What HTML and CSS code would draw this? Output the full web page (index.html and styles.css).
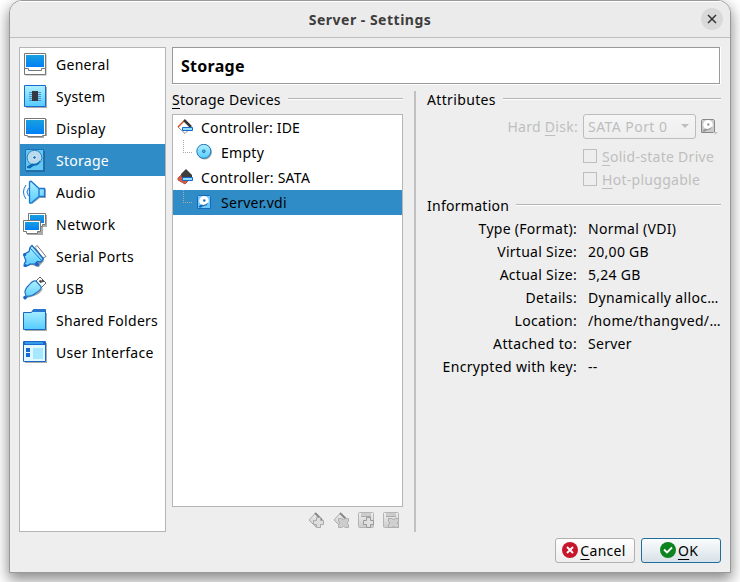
FILE: index.html
```
<!DOCTYPE html>
<html lang="en">
<head>
<meta charset="utf-8">
<title>Server - Settings</title>
<link rel="stylesheet" href="styles.css">
</head>
<body>
<svg class="defs" aria-hidden="true">
  <defs>
    <linearGradient id="screen" x2="0" y2="1"><stop stop-color="#189fe0"/><stop offset="1" stop-color="#0080f6"/></linearGradient>
    <linearGradient id="cyan" x2="0" y2="1"><stop stop-color="#b0f0ff"/><stop offset="1" stop-color="#55ccff"/></linearGradient>
    <linearGradient id="gray" x2="0" y2="1"><stop stop-color="#eee"/><stop offset="1" stop-color="#ccc"/></linearGradient>
    <symbol id="disk-mini" viewBox="0 0 16 16">
      <path d="M2.500 1.500h11l1 1v12h-13v-12z" class="disk-case"/>
      <circle cx="8" cy="6.800" r="4.800" class="disk-plate"/>
      <circle cx="8.300" cy="6.500" r="1.200" class="disk-hub"/>
      <path d="M2.500 12.500L5 10.500Q9 12 12 8.500 11.500 12 7.500 12L4 14z" class="disk-arm"/>
    </symbol>
  </defs>
</svg>
<div class="window">
  <header class="titlebar">
    <h1>Server - Settings</h1>
    <button class="close" aria-label="Close"><svg width="10" height="10" viewBox="0 0 10 10"><path d="M1 1 L9 9 M9 1 L1 9" stroke="#333" stroke-width="1.500"/></svg></button>
  </header>
  <main class="content">
    <nav class="sidebar">
      <a class="item"><svg class="icon" viewBox="0 0 24 24"><path d="M2.500 2.500h21v21h-21z" fill="#aaa"/><path d="M1.500 1.500h21v21h-21z" fill="#fff" stroke="#777"/><path d="M3 3h18v12H3z" fill="url(#screen)"/><path d="M1.500 16.500h4v2h13v-2h4" fill="none" stroke="#777"/></svg><span>General</span></a>
      <a class="item"><svg class="icon" viewBox="0 0 24 24"><path d="M3 3h21v21H3z" fill="#aaa"/><path d="M1.500 1.500h21v21h-21z" fill="url(#cyan)" stroke="#1768d0"/><path d="M6 8.500h12M6 10.500h12M6 12.500h12M6 14.500h12M6 16.500h12" stroke="#4d93c7"/><path d="M9 7h6v10H9z" fill="#343942"/></svg><span>System</span></a>
      <a class="item"><svg class="icon" viewBox="0 0 24 24"><path d="M3 3h21v17h-3v2H5z" fill="#aaa"/><path d="M1.500 2.500h21v17h-3v1h-15v-1h-3z" fill="#fff" stroke="#777"/><path d="M3 4h18v14H3z" fill="url(#screen)"/></svg><span>Display</span></a>
      <a class="item selected"><svg class="icon" viewBox="0 0 24 24"><path d="M3 3h19v21H3z" fill="#256c9e"/><path d="M2.500 1.500h18v21h-18z" fill="#65c8f3" stroke="#1d71b9"/><circle cx="11.500" cy="9.700" r="7.400" fill="#b9daec" stroke="#2781bd"/><circle cx="11.500" cy="9.500" r="1.800" fill="#176bb4" stroke="#e0f4ff"/><path d="M4 18.500l5-3q6 1 8.500-4-.5 6-6.500 6l-4 3-3-.5z" fill="#0968b3"/></svg><span>Storage</span></a>
      <a class="item"><svg class="icon" viewBox="0 0 24 24"><path d="M9 2l8 7h6v9h-6l-8 6z" fill="#aaa"/><path d="M6.500 2Q8 .5 9 2l7 6.500v8L8.500 23Q6 24 6.500 21zM16 8.500h5.500v8H16" fill="url(#cyan)" stroke="#1b75cf" stroke-width="1.300"/><path d="M3 5q-5 7 0 14M5.500 8q-3 4 0 8" fill="none" stroke="#1b75cf"/></svg><span>Audio</span></a>
      <a class="item wide"><svg class="icon" viewBox="0 0 24 24"><path d="M7 3h17v12h-4v8H4z" fill="#aaa"/><path d="M5.500 1.500h17v11h-3v2h-11v-2h-3z" fill="#fff" stroke="#777"/><path d="M7 3h14v8H7z" fill="url(#screen)"/><path d="M.500 8.500h17v11h-3v2h-11v-2h-3z" fill="#fff" stroke="#777"/><path d="M2 10h14v8H2z" fill="url(#screen)"/></svg><span>Network</span></a>
      <a class="item"><svg class="icon" viewBox="0 0 24 24"><path d="M12 3.500L14 1.500 23 12.500 20 14z" fill="#fff" stroke="#777"/><path d="M3 22l6-1 7 2 2-3 3-3L10 3 5 13z" fill="#999"/><path d="M1 22q0-3 2-5L.500 10.500 6 7.500l1-4L9 1.500 20.500 15l-3 3-3-.5L12 20H7q-3 3-6 2z" fill="url(#cyan)" stroke="#1b66c3" stroke-width="1.200"/><path d="M7 4l12 13" stroke="#1b75cf"/><circle cx="1.800" cy="10.500" r="1.500" fill="#1768c8"/><circle cx="14" cy="20.500" r="2" fill="#1768c8"/><circle cx="2.500" cy="21.500" r="1.500" fill="#1768c8"/></svg><span>Serial Ports</span></a>
      <a class="item"><svg class="icon" viewBox="0 0 24 24"><path d="M17 1l6 6-5 5-6-6z" fill="#fff" stroke="#666"/><path d="M16.500 4.500l2 2M19 4l1.500 2" stroke="#444" stroke-width="1.800"/><path d="M4 22l7-2q8-3 9-8L5 20z" fill="#aaa"/><path d="M1.500 22L3 19Q0 15 6 9q4-5 7-4l5 5.500q1 3-5 6.500-5 4-8 3l-3 3z" fill="url(#cyan)" stroke="#2875bd" stroke-width="1.200"/><circle cx="2" cy="21.500" r="1.800" fill="#1768c8"/></svg><span>USB</span></a>
      <a class="item"><svg class="icon" viewBox="0 0 24 24"><path d="M2 5h22v18H2z" fill="#aaa"/><path d="M.500 4.500h8l2-3h12v20H.500z" fill="url(#cyan)" stroke="#1b67c8"/><path d="M8.500 4L11 1h11v3z" fill="#2875cf"/></svg><span>Shared Folders</span></a>
      <a class="item"><svg class="icon" viewBox="0 0 24 24"><path d="M2 3h22v20H2z" fill="#aaa"/><path d="M.500 1.500h22v20H.500z" fill="#e2f8ff" stroke="#1b67c8"/><path d="M1 2h21v3H1z" fill="#1768d0"/><path d="M2 3h18" stroke="#55ccff"/><path d="M3 8h4v4H3zM3 13h4v4H3z" fill="#1768d0"/><path d="M10 8h10v11H10z" fill="#a5e8ff"/></svg><span>User Interface</span></a>
    </nav>
    <section class="page">
      <h2 class="page-title"><span>Storage</span></h2>
      <div class="columns">
        <div class="devices">
          <div class="legend"><span><u>S</u>torage Devices</span><i></i></div>
          <div class="tree">
            <div class="row narrow"><svg class="node" viewBox="0 0 16 16"><path d="M8 1L1 8l7 6.500 3-3" fill="#fff" stroke="#888"/><path d="M1 8l6-6" stroke="#d64b24" stroke-width="1.500"/><path d="M7 1l7 7" stroke="#333" stroke-width="2.500"/><path d="M5.500 8.500h10v3h-10z" fill="#8bdeff" stroke="#1768c8"/></svg><span>Controller: IDE</span></div>
            <div class="row child"><i class="branch"></i><svg class="node" viewBox="0 0 16 16"><circle cx="8.600" cy="8" r="7.400" fill="#aaa"/><circle cx="7.800" cy="7.300" r="7" fill="url(#cyan)" stroke="#2477bd"/><circle cx="7.800" cy="7.300" r="1.300" fill="#55bced" stroke="#1768a8"/></svg><span>Empty</span></div>
            <div class="row"><svg class="node" viewBox="0 0 16 16"><path d="M1 9l4-4 6 7-3 3-7-4z" fill="#dc5639" stroke="#b65a49"/><path d="M4 5l5-5 6 6v3H5z" fill="#3d3d3d"/><path d="M5.500 8.500h10v3h-10z" fill="#8bdeff" stroke="#1768c8"/></svg><span>Controller: SATA</span></div>
            <div class="row child selected-row"><i class="branch"></i><svg class="node disk-small"><use href="#disk-mini"/></svg><span>Server.vdi</span></div>
          </div>
          <div class="tools">
            <svg viewBox="0 0 16 16"><path d="M7.500 1L1 8l7 7 6-7z" fill="url(#gray)" stroke="#aaa"/><path d="M7 1l7 7" stroke="#888" stroke-width="2"/><path d="M8.500 5.500h4v3h3v4h-3v3h-4v-3h-3v-4h3z" fill="#ddd" stroke="#aaa"/></svg>
            <svg viewBox="0 0 16 16"><path d="M7.500 1L1 8l7 7 6-7z" fill="url(#gray)" stroke="#aaa"/><path d="M7 1l7 7" stroke="#888" stroke-width="2"/><path d="M5.500 6.500h3l2 1 2-1h3v3l-1.500 1.500 1.500 1.500v3h-3l-2-1-2 1h-3v-3L7 11 5.500 9.500z" fill="#ccc" stroke="#b0b0b0"/></svg>
            <svg viewBox="0 0 16 16"><rect x=".500" y=".500" width="15" height="15" rx="1" fill="url(#gray)" stroke="#b5b5b5"/><path d="M3 1h10v3H3z" fill="#ccc"/><path d="M3 4.500h10" stroke="#aaa"/><path d="M8.500 5.500h4v3h3v4h-3v3h-4v-3h-3v-4h3z" fill="#e0e0e0" stroke="#999"/></svg>
            <svg viewBox="0 0 16 16"><rect x=".500" y=".500" width="15" height="15" rx="1" fill="url(#gray)" stroke="#b5b5b5"/><path d="M3 1h10v3H3z" fill="#ccc"/><path d="M3 4.500h10" stroke="#aaa"/><path d="M5.500 6.500h3l2 1 2-1h3v3l-1.500 1.500 1.500 1.500v3h-3l-2-1-2 1h-3v-3L7 11 5.500 9.500z" fill="#d0d0d0" stroke="#aaa"/></svg>
          </div>
        </div>
        <div class="divider"></div>
        <div class="details">
          <div class="legend"><span class="wider">Attributes</span><i></i></div>
          <div class="attribute">
            <label><span>Hard <u>D</u>isk:</span></label>
            <div class="select"><span>SATA Port 0</span><svg width="8" height="5" viewBox="0 0 8 5"><path d="M0 0h8L4 4z" fill="#bebebe"/></svg></div>
            <svg class="disk-button" viewBox="0 0 18 18"><svg width="16" height="16"><use href="#disk-mini"/></svg><path d="M13 14h5l-2.500 2.500z" fill="#c5c5c5"/></svg>
          </div>
          <div class="check"><i></i><span><u>S</u>olid-state Drive</span></div>
          <div class="check"><i></i><span><u>H</u>ot-pluggable</span></div>
          <div class="legend info-legend"><span>Information</span><i></i></div>
          <dl>
            <dt>Type (Format):</dt><dd>Normal (VDI)</dd>
            <dt>Virtual Size:</dt><dd>20,00 GB</dd>
            <dt>Actual Size:</dt><dd>5,24 GB</dd>
            <dt class="wider">Details:</dt><dd class="wider">Dynamically alloc…</dd>
            <dt>Location:</dt><dd class="wider">/home/thangved/…</dd>
            <dt class="wider">Attached to:</dt><dd>Server</dd>
            <dt class="wider">Encrypted with key:</dt><dd>--</dd>
          </dl>
        </div>
      </div>
    </section>
  </main>
  <footer>
    <button class="action"><svg width="16" height="16" viewBox="0 0 16 16"><circle cx="8" cy="8" r="8" fill="#c7162b"/><path d="M5 5l6 6M11 5l-6 6" stroke="#fff" stroke-width="1.900"/></svg><span><u>C</u>ancel</span></button>
    <button class="action ok"><svg width="16" height="16" viewBox="0 0 16 16"><circle cx="8" cy="8" r="8" fill="#0e8420"/><path d="M4 7.500l3 3 5-5" fill="none" stroke="#fff" stroke-width="1.800"/></svg><span><u>O</u>K</span></button>
  </footer>
</div>
</body>
</html>
```
FILE: styles.css
```
* { box-sizing: border-box; }
body { margin: 0; width: 740px; height: 582px; overflow: hidden; background: #fff; color: #000; font: 14px/20px "Noto Sans", sans-serif; letter-spacing: .28px; }
h1, h2, dl, dd { margin: 0; }
button { font: inherit; letter-spacing: inherit; padding: 0; }
span, dd { white-space: nowrap; }
u { text-decoration-thickness: 1px; text-underline-offset: 3px; text-decoration-skip-ink: none; }
.wide { letter-spacing: .5px; }
.wider { letter-spacing: .35px; }
.narrow { letter-spacing: .2px; }
.defs { display: block; width: 0; height: 0; }
.window { width: 722px; height: 573px; margin-left: 9px; border: 1px solid #999; border-radius: 13px 13px 0 0; background: #eee; box-shadow: 0 6px 14px 1px rgba(0,0,0,.45); overflow: hidden; }
.titlebar { display: grid; grid-template-columns: 36px 1fr 36px; align-items: center; height: 37px; background: #ebebeb; border-top: 1px solid #fff; border-bottom: 1px solid #bebebe; }
.titlebar h1 { grid-column: 2; text-align: center; font-size: 14px; letter-spacing: .5px; font-weight: 700; color: #3d3d3d; }
.close { width: 22px; height: 22px; margin: -2px 0 0 7px; border: 0; border-radius: 50%; background: #d9d9d9; display: grid; place-items: center; }
.content { display: flex; gap: 6px; padding: 9px 9px 0; height: 494px; }
.sidebar { width: 147px; height: 485px; border: 1px solid #b5b5b5; background: #fff; }
.item { display: flex; align-items: center; height: 32px; padding-left: 3px; gap: 9px; }
.item span { padding-top: 2px; }
.icon { width: 24px; height: 24px; flex: none; }
.selected { background: #308cc6; color: #fff; }
.page { width: 549px; }
.page-title { width: 548px; height: 37px; display: flex; align-items: center; padding: 0 0 0 8px; border: 1px solid #999; box-shadow: 0 1px #fff, 1px 0 #fff; background: #fff; font-size: 16px; }
.columns { display: flex; height: 448px; }
.devices { width: 231px; }
.legend { display: flex; align-items: flex-start; height: 30px; padding-top: 6px; gap: 7px; }
.legend i { flex: 1; height: 2px; margin-top: 8px; border-top: 1px solid #b5b5b5; background: #fff; }
.tree { height: 393px; border: 1px solid #b5b5b5; background: #fff; }
.row { display: flex; align-items: center; height: 25px; padding-left: 4px; gap: 8px; }
.row span { padding-top: 1px; }
.node { width: 16px; height: 16px; flex: none; margin-top: -1px; }
.child { padding-left: 10px; gap: 0; }
.branch { width: 9px; height: 13px; margin: 0 4px 12px 0; border-left: 1px dotted #aaa; border-bottom: 1px dotted #aaa; }
.child .node { margin-right: 9px; }
.selected-row { background: #308cc6; }
.tools { display: flex; justify-content: flex-end; gap: 9px; padding: 5px 4px 0 0; }
.tools svg { width: 16px; height: 16px; }
.divider { width: 2px; height: 441px; background: #c1c1c1; margin: 7px 11px 0; }
.details { width: 294px; }
.attribute { display: grid; grid-template-columns: 151px 113px 18px; column-gap: 5px; align-items: center; height: 25px; color: #bebebe; }
.attribute label { text-align: right; }
.select { display: flex; align-items: center; justify-content: space-between; height: 25px; padding: 0 6px 0 4px; border: 1px solid #bdbdbd; border-radius: 3px; background: linear-gradient(#f5f5f5, #eee); letter-spacing: .45px; }
.disk-button { width: 18px; height: 18px; margin-left: -1px; --case: #ccc; --edge: #888; --plate: #fff; --mark: #999; }
.check { display: flex; align-items: center; height: 23px; padding-left: 156px; gap: 5px; color: #bebebe; }
.attribute + .check { margin-top: 6px; }
.check i { width: 14px; height: 14px; border: 1px solid #bebebe; margin-top: -1px; }
.info-legend { height: 26px; padding-top: 5px; }
dl { display: grid; grid-template-columns: 150px 132px; column-gap: 11px; grid-auto-rows: 23px; line-height: 23px; }
dt { text-align: right; }
dd { overflow: hidden; }
footer { display: flex; justify-content: flex-end; gap: 6px; padding: 6px 9px 0 0; }
.action { width: 80px; height: 25px; display: flex; align-items: center; justify-content: center; gap: 2px; padding-right: 2px; border: 1px solid #b0b0b0; border-radius: 3px; background: linear-gradient(#fff, #eee); color: #000; }
.action svg { margin-top: -2px; }
.ok { padding-right: 4px; border-color: #216d99; background: linear-gradient(#fafcfd, #d8e1e8); }
.disk-case { fill: var(--case); stroke: var(--edge); }
.disk-plate { fill: var(--plate); }
.disk-hub { fill: var(--mark); }
.disk-arm { fill: var(--mark); }
.disk-small { --case: #70caff; --edge: #1768bb; --plate: #fff; --mark: #176bb4; }
```
